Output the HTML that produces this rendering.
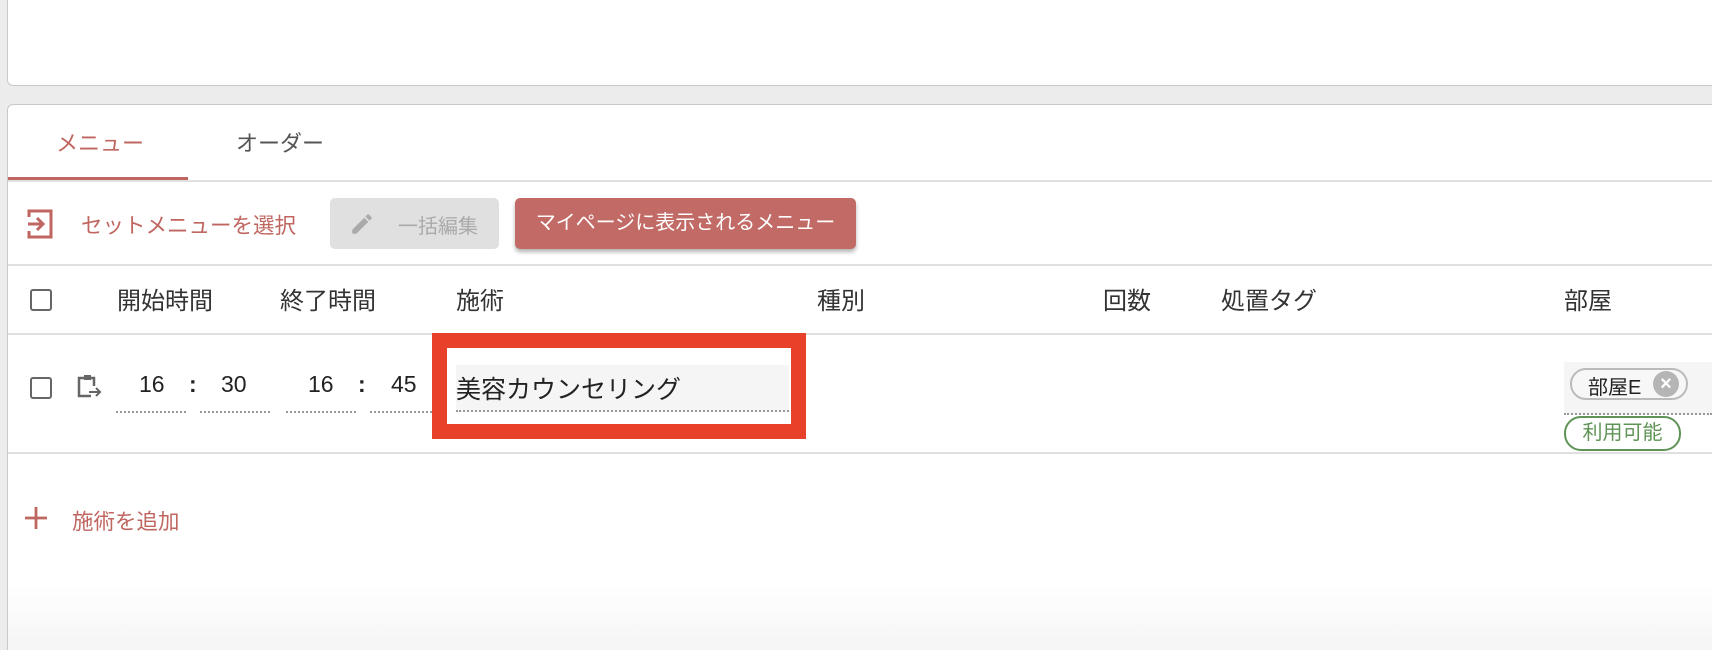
<!DOCTYPE html>
<html style="overflow:hidden;height:650px"><head><meta charset="utf-8"><style>
*{box-sizing:border-box;margin:0;padding:0}
body{width:1712px;height:650px;background:#ececec;font-family:"Liberation Sans","Noto Sans CJK JP",sans-serif;position:relative;overflow:hidden;color:#333}
.a{position:absolute;white-space:nowrap}
.card1{position:absolute;left:7px;top:-10px;width:1720px;height:96px;background:#fff;border:1px solid #c8c8c8;border-radius:6px}
.card2{position:absolute;left:7px;top:104px;width:1720px;height:560px;border:1px solid #c8c8c8;border-bottom:none;border-radius:6px 6px 0 0}
.hr{position:absolute;left:8px;right:0;height:2px;background:#e0e0e0}
.cb{position:absolute;width:22px;height:22px;border:2.5px solid #666;border-radius:3px}
.th{font-size:24px;color:#333;top:281px}
.num{font-size:23px;color:#222;top:371px}
.dot{position:absolute;top:411px;height:0;border-top:2px dotted #999}
</style></head><body>
<div class="card1"></div>
<div class="card2" style="background:linear-gradient(to bottom,#fff 0,#fff 480px,#f5f5f5 546px)"></div>
<div class="a" style="left:56px;top:126px;font-size:22px;color:#c06660">メニュー</div>
<div class="a" style="left:236px;top:126px;font-size:22px;color:#555">オーダー</div>
<div class="a" style="left:8px;top:177px;width:180px;height:4px;background:#c06660"></div>
<div class="hr" style="top:180px"></div>
<svg class="a" style="left:26px;top:207px" width="30" height="34" viewBox="0 0 30 34"><path d="M3 10V4h22v26H3v-6" fill="none" stroke="#c06660" stroke-width="3"/><path d="M2 17h15M11 11l6 6-6 6" fill="none" stroke="#c06660" stroke-width="3"/></svg>
<div class="a" style="left:81px;top:209px;font-size:21.5px;color:#c06660">セットメニューを選択</div>
<div class="a" style="left:330px;top:198px;width:169px;height:51px;background:#e0e0e0;border-radius:5px"></div>
<svg class="a" style="left:349px;top:211px" width="26" height="26" viewBox="0 0 24 24"><path d="M3 17.25V21h3.75L17.81 9.94l-3.75-3.75L3 17.25zM20.71 7.04a1 1 0 000-1.41l-2.34-2.34a1 1 0 00-1.41 0l-1.83 1.83 3.75 3.75 1.83-1.83z" fill="#aaa"/></svg>
<div class="a" style="left:398px;top:210px;font-size:20px;color:#aaa">一括編集</div>
<div class="a" style="left:515px;top:198px;width:341px;height:51px;background:#c26b66;border-radius:5px;box-shadow:0 3px 4px rgba(0,0,0,.3);color:#fff;font-size:20px;text-align:center;line-height:51px">マイページに表示されるメニュー</div>
<div class="hr" style="top:264px"></div>
<div class="cb" style="left:30px;top:289px"></div>
<div class="a th" style="left:117px">開始時間</div>
<div class="a th" style="left:280px">終了時間</div>
<div class="a th" style="left:456px">施術</div>
<div class="a th" style="left:817px">種別</div>
<div class="a th" style="left:1103px">回数</div>
<div class="a th" style="left:1221px">処置タグ</div>
<div class="a th" style="left:1564px">部屋</div>
<div class="hr" style="top:333px"></div>
<div class="cb" style="left:30px;top:377px"></div>
<svg class="a" style="left:75px;top:373px" width="28" height="28" viewBox="0 0 28 28"><path d="M6 5h3M16 5h3v8M16 23H4V5h2" fill="none" stroke="#666" stroke-width="2.5"/><rect x="9" y="2" width="7" height="5" fill="#666"/><path d="M14 19h11M21 15l4 4-4 4" fill="none" stroke="#666" stroke-width="2"/></svg>
<div class="a num" style="left:139px">16</div>
<div class="a num" style="left:189px;font-weight:bold">:</div>
<div class="a num" style="left:221px">30</div>
<div class="a num" style="left:308px">16</div>
<div class="a num" style="left:358px;font-weight:bold">:</div>
<div class="a num" style="left:391px">45</div>
<div class="dot" style="left:116px;width:70px"></div>
<div class="dot" style="left:200px;width:70px"></div>
<div class="dot" style="left:286px;width:70px"></div>
<div class="dot" style="left:370px;width:62px"></div>
<div class="a" style="left:432px;top:333px;width:374px;height:106px;border:15px solid #e8412a;background:#fff"></div>
<div class="a" style="left:456px;top:365px;width:333px;height:47px;background:#f5f5f5;border-bottom:2px dotted #999"></div>
<div class="a" style="left:456px;top:370px;font-size:25px;color:#222">美容カウンセリング</div>
<div class="a" style="left:1564px;top:362px;width:148px;height:53px;background:#f5f5f5;border-bottom:2px dotted #999"></div>
<div class="a" style="left:1570px;top:368px;width:118px;height:32px;border:2px solid #bbb;border-radius:16px;background:#f7f7f7"></div>
<div class="a" style="left:1588px;top:371px;font-size:20px;color:#222">部屋E</div>
<div class="a" style="left:1653px;top:371px;width:26px;height:26px;border-radius:13px;background:#b5b5b5;color:#fff;font-size:20px;font-weight:bold;text-align:center;line-height:26px">×</div>
<div class="a" style="left:1564px;top:416px;width:117px;height:35px;border:2px solid #5f9456;border-radius:17px;color:#5f9456;font-size:20px;text-align:center;line-height:30px">利用可能</div>
<div class="hr" style="top:452px"></div>
<svg class="a" style="left:24px;top:506px" width="24" height="24" viewBox="0 0 24 24"><path d="M12 1v22M1 12h22" stroke="#c06660" stroke-width="2.8"/></svg>
<div class="a" style="left:72px;top:505px;font-size:21.5px;color:#c06660">施術を追加</div>
</body></html>
